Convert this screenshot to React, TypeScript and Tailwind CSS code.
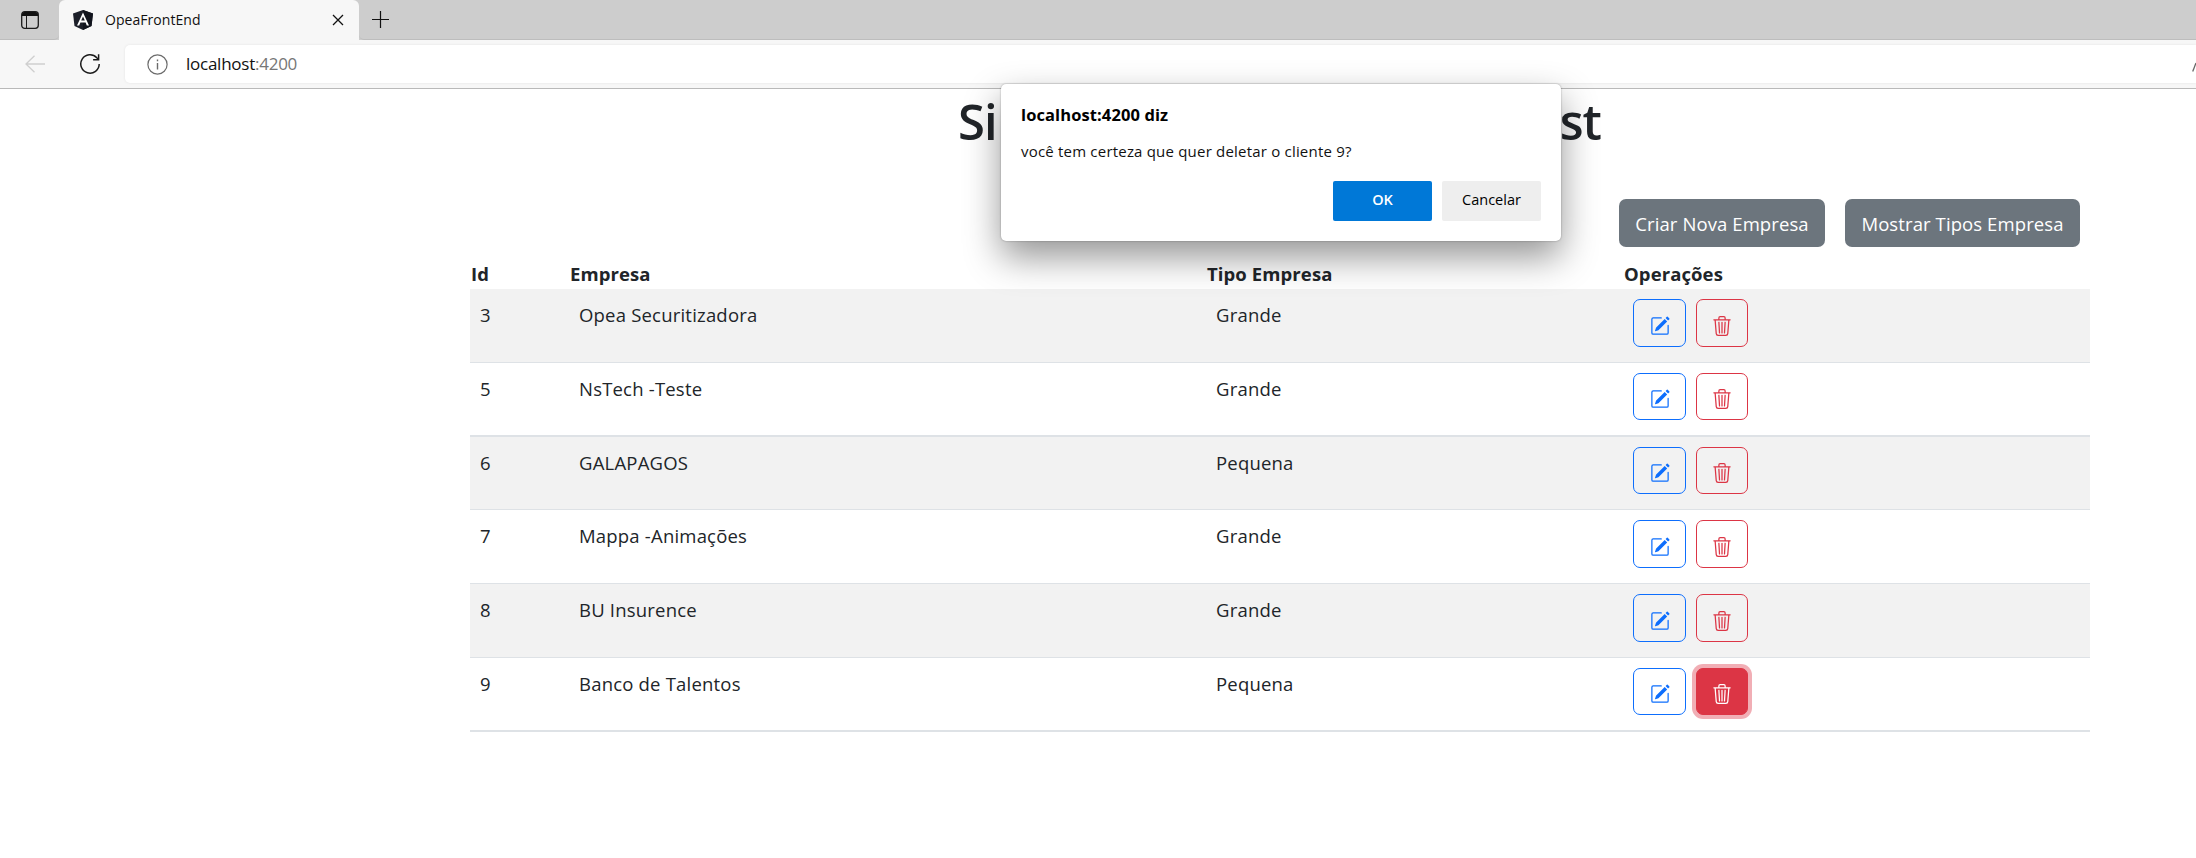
import type { ReactNode } from "react";
import { BsPencilSquare, BsTrash3 } from "react-icons/bs";

type Row = { id: number; empresa: string; tipo: string; frame: string; button: string; active?: boolean };

const line = "border-b border-[#dee2e6]";
const thick = "border-b-2 border-[#dee2e6]";

const rows: Row[] = [
  { id: 3, empresa: "Opea Securitizadora", tipo: "Grande", frame: `h-[74px] bg-[#f2f2f2] ${line}`, button: "h-12" },
  { id: 5, empresa: "NsTech -Teste", tipo: "Grande", frame: `h-[74px] ${thick}`, button: "h-[47px]" },
  { id: 6, empresa: "GALAPAGOS", tipo: "Pequena", frame: `h-[73px] bg-[#f2f2f2] ${line}`, button: "h-[47px]" },
  { id: 7, empresa: "Mappa -Animações", tipo: "Grande", frame: `h-[74px] ${line}`, button: "h-12" },
  { id: 8, empresa: "BU Insurence", tipo: "Grande", frame: `h-[74px] bg-[#f2f2f2] ${line}`, button: "h-12" },
  { id: 9, empresa: "Banco de Talentos", tipo: "Pequena", frame: `h-[74px] ${thick}`, button: "h-[47px]", active: true },
];

const grid = "grid grid-cols-[99px_637px_417px_1fr]";

function Browser() {
  return (
    <header className="h-[89px] border-b border-[#b9b9b9] bg-[#f7f7f7]">
      <div className="flex h-10 bg-[#cdcdcd]">
        <div className="flex w-[59px] items-center rounded-br-[5px] border-b border-[#bdbdbd] pl-[21px]">
          <svg width="18" height="18" viewBox="0 0 18 18" fill="none" stroke="#1b1b1b">
            <rect x="0.7" y="0.7" width="16.6" height="16.6" rx="3" strokeWidth="1.3" />
            <path d="M1 3.5A2.5 2.5 0 0 1 3.5 1h11A2.5 2.5 0 0 1 17 3.5V5H1z" fill="#111" stroke="none" />
            <path d="M5.5 5v12" strokeWidth="1" />
          </svg>
        </div>
        <div className="flex w-[300px] items-center rounded-t-[6px] bg-[#f7f7f7] pl-[14px]">
          <svg width="20" height="20" viewBox="0 0 20 20">
            <path d="M10 0 20 3.5 18.5 16 10 20 1.5 16 0 3.5z" fill="#1c1f29" />
            <path d="M10 0 20 3.5 18.5 16 10 20z" fill="#11141d" />
            <path d="M10 2.4 4 15.4h2.2l1.2-3h5.2l1.2 3H16zM10 6.5l1.8 4.1H8.2z" fill="#fff" fillRule="evenodd" />
          </svg>
          <span className="ml-3 text-[14px] leading-5 tracking-[0.05px] text-[#111]">OpeaFrontEnd</span>
          <svg className="mr-[15px] ml-auto" width="12" height="12" viewBox="0 0 12 12" stroke="#111" strokeWidth="1.3">
            <path d="M1 1l10 10M11 1 1 11" />
          </svg>
        </div>
        <div className="flex flex-1 items-center rounded-bl-[5px] border-b border-[#bdbdbd] pl-[13px]">
          <svg width="17" height="17" viewBox="0 0 17 17" stroke="#111" strokeWidth="1.2">
            <path d="M8.5 0v17M0 8.5h17" />
          </svg>
        </div>
      </div>
      <div className="flex h-12 items-center">
        <svg className="ml-[25px]" width="20" height="18" viewBox="0 0 20 18" fill="none" stroke="#cfcfcf" strokeWidth="1.3">
          <path d="M20 9H1M9.5.7 1 9l8.500 8.300" />
        </svg>
        <svg className="ml-[35px]" width="20" height="20" viewBox="0 0 20 20" fill="none" stroke="#1b1b1b" strokeWidth="1.5">
          <path d="M19.200 10A9.200 9.200 0 1 1 16.800 3.800L18.500 5.500" />
          <path d="M18.600.2v5.500h-5.500" />
        </svg>
        <div className="ml-[25px] flex h-[38px] flex-1 items-center rounded-l-[5px] bg-white pl-[22px] shadow-[0_0_3px_rgba(0,0,0,0.08)]">
          <svg width="21" height="21" viewBox="0 0 21 21" fill="none" stroke="#6b6b6b" strokeWidth="1.2">
            <circle cx="10.500" cy="10.500" r="9.600" />
            <path d="M10.500 9v6.500M10.500 5.600v1.700" strokeWidth="1.400" />
          </svg>
          <span className="ml-[18px] text-[17px] leading-6 tracking-[-0.25px] text-[#111]">
            localhost<span className="text-[#767676]">:4200</span>
          </span>
          <svg className="mt-[6px] ml-auto" width="4" height="10" viewBox="0 0 4 10" stroke="#666" strokeWidth="1.300">
            <path d="M.7 9.500 4 1" />
          </svg>
        </div>
      </div>
    </header>
  );
}

function ActionButton({ look, children }: { look: string; children: ReactNode }) {
  return (
    <button className={`flex items-center justify-center rounded-[7px] border pt-[5px] ${look}`}>
      {children}
    </button>
  );
}

function Dialog() {
  return (
    <div
      role="dialog"
      className="absolute top-[84px] left-[1001px] flex h-[157px] w-[560px] flex-col rounded-[5px] bg-white px-5 shadow-[0_0_2px_rgba(0,0,0,0.35),0_16px_36px_rgba(0,0,0,0.42)]"
    >
      <h2 className="mt-[19px] text-[16.500px] leading-6 font-bold tracking-[0.1px] text-black">localhost:4200 diz</h2>
      <p className="mt-[14px] text-[15px] leading-5 tracking-[0.2px] text-[#111]">
        você tem certeza que quer deletar o cliente 9?
      </p>
      <div className="mt-5 flex justify-end gap-[10px] text-[14.500px]">
        <button className="h-10 w-[99px] rounded-[2px] bg-[#0078d7] pb-[2px] font-semibold text-white">OK</button>
        <button className="h-10 w-[99px] rounded-[2px] bg-[#eeeeee] pb-[2px] font-medium text-black">Cancelar</button>
      </div>
    </div>
  );
}

export default function App() {
  return (
    <div className="relative h-[858px] w-[2196px] overflow-hidden bg-white font-['Open_Sans','Noto_Sans',sans-serif] text-[#212529]">
      <Browser />
      <main className="ml-[470px] w-[1620px]">
        <h1 className="ml-[488px] flex w-[643px] justify-between pt-[2px] text-[49px] leading-[60px] font-semibold tracking-[-1px]">
          <span>Si</span>
          <span>st</span>
        </h1>
        <div className="mt-[48px] flex justify-end gap-5 pr-[10px] text-[18.500px] tracking-[0.1px] text-white">
          <button className="h-12 w-[206px] rounded-[7px] bg-[#6c757d] pt-[2px]">Criar Nova Empresa</button>
          <button className="h-12 w-[235px] rounded-[7px] bg-[#6c757d] pt-[2px]">Mostrar Tipos Empresa</button>
        </div>
        <div className={`${grid} h-[42px] pt-[12px] pl-px text-[18.500px] leading-[30px] font-bold tracking-[0.1px]`}>
          <span>Id</span>
          <span>Empresa</span>
          <span>Tipo Empresa</span>
          <span>Operações</span>
        </div>
        {rows.map((r) => (
          <div key={r.id} className={`${grid} pt-[10px] pl-[10px] text-[18.500px] leading-[32px] tracking-[0.2px] ${r.frame}`}>
            <span>{r.id}</span>
            <span>{r.empresa}</span>
            <span>{r.tipo}</span>
            <div className="flex items-start gap-[10px]">
              <ActionButton look={`w-[53px] border-[#0d6efd] text-[#0d6efd] ${r.button}`}>
                <BsPencilSquare size={20} />
              </ActionButton>
              <ActionButton
                look={
                  r.active
                    ? `w-[52px] border-[#dc3545] bg-[#dc3545] text-white shadow-[0_0_0_4px_rgba(220,53,69,0.4)] ${r.button}`
                    : `w-[52px] border-[#dc3545] text-[#dc3545] ${r.button}`
                }
              >
                <BsTrash3 size={20} />
              </ActionButton>
            </div>
          </div>
        ))}
      </main>
      <Dialog />
    </div>
  );
}
